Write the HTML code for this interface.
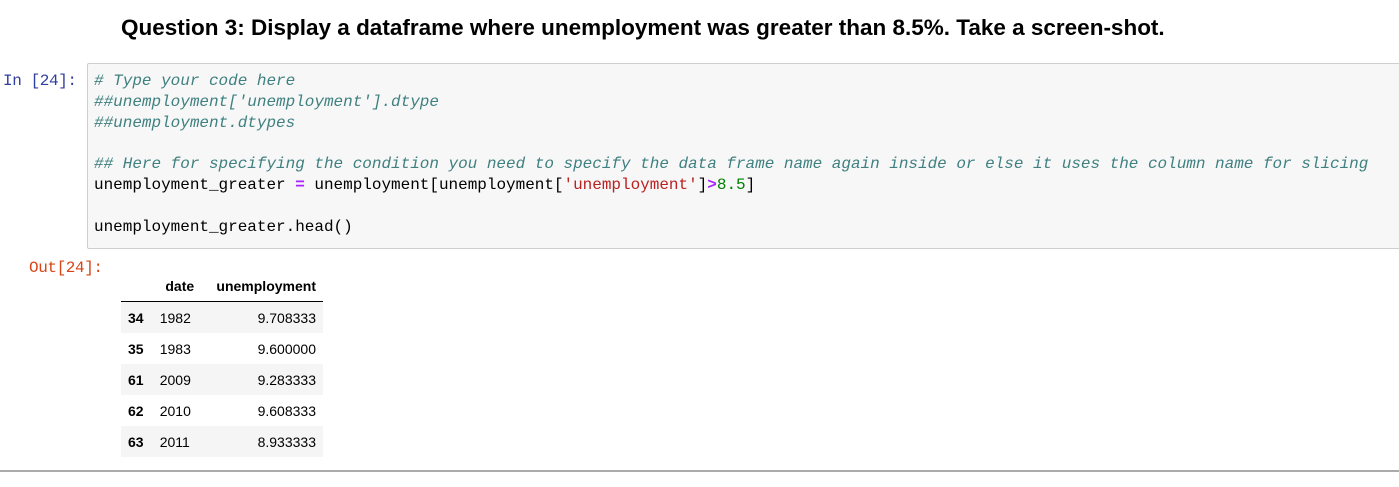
<!DOCTYPE html>
<html><head><style>
body{margin:0;width:1399px;height:487px;background:#fff;position:relative;overflow:hidden;font-family:"Liberation Sans",Arial,sans-serif}
.t{position:absolute;left:121px;top:15px;font-size:22.5px;font-weight:bold;color:#000;white-space:nowrap}
.in{position:absolute;left:3px;top:71px;font:16px/20.8px "Liberation Mono",monospace;color:#303f9f;letter-spacing:-0.4px}
.out{position:absolute;left:29px;top:258px;font:16px/20.8px "Liberation Mono",monospace;color:#d84315;letter-spacing:-0.4px}
.box{position:absolute;left:87px;top:63px;width:1320px;height:184px;background:#f7f7f7;border:1px solid #cfcfcf;border-radius:2px}
pre{position:absolute;left:94px;top:71px;margin:0;font:16px/20.8px "Liberation Mono",monospace;color:#000;letter-spacing:-0.02px}
.c{color:#408080;font-style:italic}
.o{color:#aa22ff;font-weight:bold}
.s{color:#ba2121}
.n{color:#008000}
table{position:absolute;left:121px;top:271px;width:202px;border-collapse:collapse;font-size:14px;color:#000}
th,td{padding:0 7px;height:31px;text-align:right}
thead th{height:30px;border-bottom:1px solid #000;font-weight:bold}
tbody tr:nth-child(odd){background:#f5f5f5}
tbody th{text-align:left}
td.d{text-align:left}
.hr{position:absolute;left:0;top:470px;width:1399px;height:2px;background:#ababab}
</style></head><body>
<div class="t">Question 3: Display a dataframe where unemployment was greater than 8.5%. Take a screen-shot.</div>
<div class="in">In [24]:</div>
<div class="box"></div>
<pre><span class="c"># Type your code here</span>
<span class="c">##unemployment['unemployment'].dtype</span>
<span class="c">##unemployment.dtypes</span>

<span class="c">## Here for specifying the condition you need to specify the data frame name again inside or else it uses the column name for slicing</span>
unemployment_greater <span class="o">=</span> unemployment[unemployment[<span class="s">'unemployment'</span>]<span class="o">&gt;</span><span class="n">8.5</span>]

unemployment_greater.head()</pre>
<div class="out">Out[24]:</div>
<table>
<thead><tr><th></th><th>date</th><th>unemployment</th></tr></thead>
<tbody>
<tr><th>34</th><td class="d">1982</td><td>9.708333</td></tr>
<tr><th>35</th><td class="d">1983</td><td>9.600000</td></tr>
<tr><th>61</th><td class="d">2009</td><td>9.283333</td></tr>
<tr><th>62</th><td class="d">2010</td><td>9.608333</td></tr>
<tr><th>63</th><td class="d">2011</td><td>8.933333</td></tr>
</tbody></table>
<div class="hr"></div>
</body></html>
